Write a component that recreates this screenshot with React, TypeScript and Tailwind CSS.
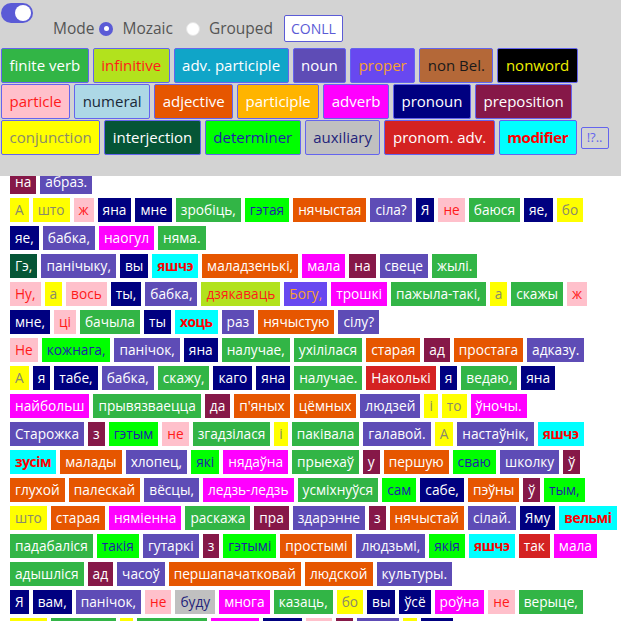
import React from "react";

const POS: Record<string, { label: string; cls: string }> = {
  fv: { label: "finite verb", cls: "bg-[#32b546] text-white" },
  inf: { label: "infinitive", cls: "bg-[#b2e21d] text-[#ff1a1a]" },
  advp: { label: "adv. participle", cls: "bg-[#10a5c8] text-white" },
  n: { label: "noun", cls: "bg-[#5e4cb6] text-white" },
  prop: { label: "proper", cls: "bg-[#6848f0] text-[#f5a030]" },
  nb: { label: "non Bel.", cls: "bg-[#b46838] text-[#1a1a1a]" },
  nw: { label: "nonword", cls: "bg-black text-[#f0f000]" },
  part: { label: "particle", cls: "bg-[#ffc0cb] text-[#ff1a1a]" },
  num: { label: "numeral", cls: "bg-[#add8e6] text-[#1a2838]" },
  adj: { label: "adjective", cls: "bg-[#e65600] text-white" },
  ptc: { label: "participle", cls: "bg-[#ffb400] text-white" },
  adv: { label: "adverb", cls: "bg-[#ff00ff] text-white" },
  pron: { label: "pronoun", cls: "bg-[#000080] text-white" },
  prep: { label: "preposition", cls: "bg-[#861848] text-white" },
  conj: { label: "conjunction", cls: "bg-[#ffff00] text-[#8a8a6a]" },
  intj: { label: "interjection", cls: "bg-[#055536] text-white" },
  det: { label: "determiner", cls: "bg-[#00ff00] text-[#1e1ea8]" },
  aux: { label: "auxiliary", cls: "bg-[#c0c0c0] text-[#23237a]" },
  padv: { label: "pronom. adv.", cls: "bg-[#d42222] text-white" },
  mod: { label: "modifier", cls: "bg-[#00ffff] text-[#ff0000] font-bold tracking-[-0.4px]" },
};

const LEGEND = [
  ["fv", "inf", "advp", "n", "prop", "nb", "nw"],
  ["part", "num", "adj", "ptc", "adv", "pron", "prep"],
  ["conj", "intj", "det", "aux", "padv", "mod"],
];

const ROWS = [
  "на:prep абраз.:n",
  "А:conj што:conj ж:part яна:pron мне:pron зробіць,:fv гэтая:det нячыстая:adj сіла?:n Я:pron не:part баюся:fv яе,:pron бо:conj",
  "яе,:pron бабка,:n наогул:adv няма.:fv",
  "Гэ,:intj панічыку,:n вы:pron яшчэ:mod маладзенькі,:adj мала:adv на:prep свеце:n жылі.:fv",
  "Ну,:part а:conj вось:part ты,:pron бабка,:n дзякаваць:inf Богу,:prop трошкі:adv пажыла-такі,:fv а:conj скажы:fv ж:part",
  "мне,:pron ці:part бачыла:fv ты:pron хоць:mod раз:n нячыстую:adj сілу?:n",
  "Не:part кожнага,:det панічок,:n яна:pron налучае,:fv ухілілася:fv старая:adj ад:prep простага:adj адказу.:n",
  "А:conj я:pron табе,:pron бабка,:n скажу,:fv каго:pron яна:pron налучае.:fv Наколькі:padv я:pron ведаю,:fv яна:pron",
  "найбольш:adv прывязваецца:fv да:prep п'яных:adj цёмных:adj людзей:n і:conj то:conj ўночы.:adv",
  "Старожка:n з:prep гэтым:det не:part згадзілася:fv і:conj пакiвала:fv галавой.:n А:conj настаўнік,:n яшчэ:mod",
  "зусім:mod малады:adj хлопец,:n які:det нядаўна:adv прыехаў:fv у:prep першую:adj сваю:det школку:n ў:prep",
  "глухой:adj палескай:adj вёсцы,:n ледзь-ледзь:adv усміхнуўся:fv сам:det сабе,:pron пэўны:adj ў:prep тым,:det",
  "што:conj старая:adj няміенна:adv раскажа:fv пра:prep здарэнне:n з:prep нячыстай:adj сілай.:n Яму:pron вельмі:mod",
  "падабаліся:fv такія:det гутаркі:n з:prep гэтымі:det простымі:adj людзьмі,:n якія:det яшчэ:mod так:padv мала:adv",
  "адышліся:fv ад:prep часоў:n першапачатковай:adj людской:adj культуры.:n",
  "Я:pron вам,:pron панічок,:n не:part буду:aux многа:adv казаць,:fv бо:conj вы:pron ўсё:pron роўна:adv не:part верыце,:fv",
  "што:conj ведаеце:fv і:conj слухаеце:fv пасля:adv таго:pron не:part ў:prep сілах:n і:conj хто:pron",
];

function parseRow(row: string) {
  return row.split(" ").map((tok) => {
    const i = tok.lastIndexOf(":");
    return { word: tok.slice(0, i), pos: tok.slice(i + 1) };
  });
}

function Radio({ checked }: { checked?: boolean }) {
  return checked ? (
    <span className="flex h-[14px] w-[14px] items-center justify-center rounded-full bg-[#5b5bd6]">
      <span className="block h-[5px] w-[5px] rounded-full bg-white" />
    </span>
  ) : (
    <span className="block h-[14px] w-[14px] rounded-full border border-[#e4e4e4] bg-white" />
  );
}

export default function App() {
  return (
    <div className="flex h-[621px] w-full flex-col overflow-hidden bg-white font-['Open_Sans',sans-serif]">
      <div className="h-[176px] shrink-0 bg-[#d3d3d3] px-[1px]">
        <div className="flex items-start">
          <div className="mt-[3px] flex h-[20px] w-[32px] items-center justify-end rounded-full bg-[#5b5bd6] pr-[2px]">
            <span className="block h-[16px] w-[16px] rounded-full bg-white" />
          </div>
          <div className="ml-[20px] mt-[15px] flex h-[27px] items-center text-[15.5px] text-[#555]">
            <span>Mode</span>
            <span className="ml-[5px]">
              <Radio checked />
            </span>
            <span className="ml-[9px]">Mozaic</span>
            <span className="ml-[13px]">
              <Radio />
            </span>
            <span className="ml-[9px]">Grouped</span>
            <button className="ml-[11px] h-[27px] rounded-[2px] border border-[#5b5bd6] bg-white px-[6px] text-[14px] text-[#5b5bd6]">
              CONLL
            </button>
          </div>
        </div>
        <div className="mt-[6px] flex flex-col gap-[1px]">
          {LEGEND.map((row, ri) => (
            <div key={ri} className="flex items-center gap-[4px]">
              {row.map((k) => (
                <button
                  key={k}
                  className={`h-[35px] whitespace-nowrap rounded-[2px] border border-[#6464ee] px-[7.5px] text-[15px] ${POS[k].cls}`}
                >
                  {POS[k].label}
                </button>
              ))}
              {ri === 2 && (
                <button className="h-[22px] rounded-[2px] border border-[#6464ee] px-[5px] text-[13px] text-[#6464ee]">
                  !?..
                </button>
              )}
            </div>
          ))}
        </div>
      </div>

      <div className="flex-1 overflow-hidden">
        <div className="-mt-[6px] flex flex-col gap-[4px] pl-[10px]">
          {ROWS.map((row, ri) => (
            <div key={ri} className="flex gap-[4px]">
              {parseRow(row).map((w, wi) => (
                <span
                  key={wi}
                  className={`h-[24px] whitespace-nowrap px-[5px] text-[13.7px] leading-[24px] ${POS[w.pos].cls}`}
                >
                  {w.word}
                </span>
              ))}
            </div>
          ))}
        </div>
      </div>
    </div>
  );
}
